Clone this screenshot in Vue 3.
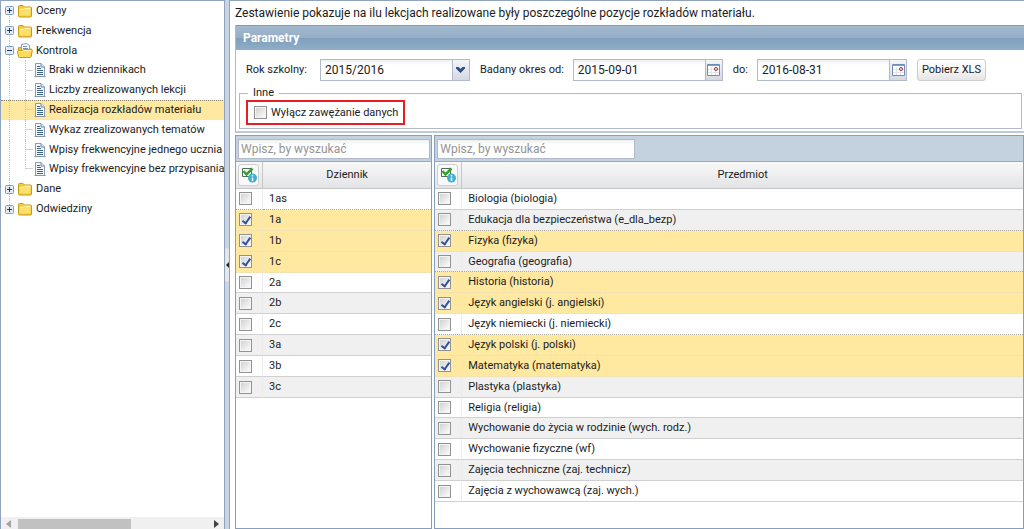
<script setup>
import { ref } from 'vue'

const tree = [
  { label: 'Oceny', kind: 'folder' },
  { label: 'Frekwencja', kind: 'folder' },
  { label: 'Kontrola', kind: 'open' },
  { label: 'Braki w dziennikach', kind: 'leaf' },
  { label: 'Liczby zrealizowanych lekcji', kind: 'leaf' },
  { label: 'Realizacja rozkładów materiału', kind: 'leaf', selected: true },
  { label: 'Wykaz zrealizowanych tematów', kind: 'leaf' },
  { label: 'Wpisy frekwencyjne jednego ucznia', kind: 'leaf' },
  { label: 'Wpisy frekwencyjne bez przypisania', kind: 'leaf', last: true },
  { label: 'Dane', kind: 'folder' },
  { label: 'Odwiedziny', kind: 'folder' },
]

const toRows = (names, checked) => names.map(name => ({ name, checked: checked.includes(name) }))

const grids = ref([
  {
    id: 'dziennik',
    title: 'Dziennik',
    rows: toRows(['1as', '1a', '1b', '1c', '2a', '2b', '2c', '3a', '3b', '3c'], ['1a', '1b', '1c']),
  },
  {
    id: 'przedmiot',
    title: 'Przedmiot',
    rows: toRows(
      [
        'Biologia (biologia)',
        'Edukacja dla bezpieczeństwa (e_dla_bezp)',
        'Fizyka (fizyka)',
        'Geografia (geografia)',
        'Historia (historia)',
        'Język angielski (j. angielski)',
        'Język niemiecki (j. niemiecki)',
        'Język polski (j. polski)',
        'Matematyka (matematyka)',
        'Plastyka (plastyka)',
        'Religia (religia)',
        'Wychowanie do życia w rodzinie (wych. rodz.)',
        'Wychowanie fizyczne (wf)',
        'Zajęcia techniczne (zaj. technicz)',
        'Zajęcia z wychowawcą (zaj. wych.)',
      ],
      [
        'Fizyka (fizyka)',
        'Historia (historia)',
        'Język angielski (j. angielski)',
        'Język polski (j. polski)',
        'Matematyka (matematyka)',
      ]
    ),
  },
])

const year = ref('2015/2016')
const dateFrom = ref('2015-09-01')
const dateTo = ref('2016-08-31')
</script>

<template>
  <div class="app">
    <nav class="sidebar">
      <ul class="tree">
        <li v-for="n in tree" :key="n.label" class="node" :class="[n.kind, { selected: n.selected, last: n.last }]">
          <button v-if="n.kind !== 'leaf'" type="button" class="expander" :aria-label="n.label">
            <svg width="9" height="9" viewBox="0 0 9 9">
              <rect x=".5" y=".5" width="8" height="8" rx="1" fill="#e4ebf5" stroke="#7e9cc4" />
              <path :d="n.kind === 'open' ? 'M2 4.5h5' : 'M2 4.5h5M4.5 2v5'" stroke="#223c66" />
            </svg>
          </button>
          <a href="#" class="link">
            <svg v-if="n.kind === 'folder'" class="icon" width="16" height="16" viewBox="0 0 16 16">
              <path d="M1.500 12.500v-9q0-1 1-1H6l1.500 1.500h6q1 0 1 1v8q0 1-1 1h-11q-1 0-1-1z" fill="#f2cb3c" stroke="#c99a14" />
              <path d="M2.500 12.500v-6q0-1 1-1h3l1-1h6v8z" fill="#fbe06c" />
              <path d="M3 7.500q0-1 1-1h3l1-1h5.500" fill="none" stroke="#fff2ac" />
            </svg>
            <svg v-else-if="n.kind === 'open'" class="icon" width="16" height="16" viewBox="0 0 16 16">
              <path d="M1.500 13V4.500h3L6 6h8.500v7z" fill="#efc636" stroke="#c99a14" />
              <path d="M4.500 1.500l5-1 3 2v6h-8z" fill="#f7fafd" stroke="#8c9fb8" />
              <path d="M6 3.500h4M6 5.500h5" stroke="#7d95b5" />
              <path d="M.5 8.500q0-1 1-1h4l1-1h8q1 0 .8 1l-1.300 6q-.2 1-1.200 1H2.500q-1 0-1.100-1z" fill="#fadb5c" stroke="#c99a14" />
              <path d="M2 8.500h4l1-1h7" fill="none" stroke="#fff2ac" />
            </svg>
            <svg v-else class="icon" width="12" height="14" viewBox="0 0 12 14">
              <path d="M1.500 13.500V.5H7l3.500 3.500v9.500z" fill="#f4f8fc" stroke="#8a9bb0" />
              <path d="M.5 13.500h11" stroke="#8695a8" />
              <path d="M7 .5V4h3.500" fill="#dbe6f2" stroke="#6f88a8" />
              <path d="M3 3.500h3M3 5.500h4M3 7.500h6M3 9.500h6M3 11.500h6" stroke="#40618e" />
            </svg>
            <span>{{ n.label }}</span>
          </a>
        </li>
      </ul>
      <div class="scrollbar">
        <svg width="5" height="8" viewBox="0 0 5 8"><path d="M5 0v8L0 4z" fill="#a3a3a3" /></svg>
        <div class="track"><div class="thumb"></div></div>
        <svg width="5" height="8" viewBox="0 0 5 8"><path d="M0 0v8l5-4z" fill="#404040" /></svg>
      </div>
    </nav>

    <div class="splitter">
      <button type="button" class="collapse" aria-label="Zwiń">
        <svg width="3" height="6" viewBox="0 0 3 6"><path d="M3 0v6L0 3z" fill="#222" /></svg>
      </button>
    </div>

    <main class="main">
      <p class="intro">Zestawienie pokazuje na ilu lekcjach realizowane były poszczególne pozycje rozkładów materiału.</p>

      <section class="params">
        <h2 class="params-title">Parametry</h2>
        <form class="fields" @submit.prevent>
          <label for="year">Rok szkolny:</label>
          <div class="combo">
            <select id="year" v-model="year">
              <option>2015/2016</option>
            </select>
            <span class="trigger arrow">
              <svg width="9" height="6" viewBox="0 0 9 6"><path d="M0 0h2.500l2 2 2-2H9v1.500L4.500 6 0 1.500z" fill="#2f4a86" /></svg>
            </span>
          </div>
          <label for="from">Badany okres od:</label>
          <div class="combo">
            <input id="from" v-model="dateFrom" type="text" />
            <button type="button" class="trigger" aria-label="Kalendarz">
              <svg width="13" height="12" viewBox="0 0 13 12">
                <path d="M.5.5h12v11H.5z" fill="#fff" stroke="#6d8cbd" />
                <path d="M1 1.500h11" stroke="#7f9ccb" />
                <path d="M4.500 3v8M8.500 3v8M1 5.500h11M1 8.500h11" stroke="#dfe5ef" />
                <circle cx="9" cy="5" r="1.500" fill="#fff" stroke="#a02030" />
              </svg>
            </button>
          </div>
          <label for="to">do:</label>
          <div class="combo">
            <input id="to" v-model="dateTo" type="text" />
            <button type="button" class="trigger" aria-label="Kalendarz">
              <svg width="13" height="12" viewBox="0 0 13 12">
                <path d="M.5.5h12v11H.5z" fill="#fff" stroke="#6d8cbd" />
                <path d="M1 1.500h11" stroke="#7f9ccb" />
                <path d="M4.500 3v8M8.500 3v8M1 5.500h11M1 8.500h11" stroke="#dfe5ef" />
                <circle cx="9" cy="5" r="1.500" fill="#fff" stroke="#a02030" />
              </svg>
            </button>
          </div>
          <button type="button" class="export">Pobierz XLS</button>
        </form>
        <fieldset class="other">
          <legend>Inne</legend>
          <label class="narrow"><input type="checkbox" class="check" />Wyłącz zawężanie danych</label>
        </fieldset>
      </section>

      <div class="grids">
        <section v-for="g in grids" :key="g.id" class="grid" :class="g.id">
          <div class="toolbar">
            <input type="text" class="search" placeholder="Wpisz, by wyszukać" :aria-label="g.title" />
          </div>
          <table>
            <thead>
              <tr>
                <th class="tick">
                  <button type="button" class="all" aria-label="Zaznacz">
                    <svg width="16" height="16" viewBox="0 0 16 16">
                      <path d="M1.500 1.500h9v8h-9z" fill="#fff" stroke="#4f6f55" />
                      <path d="M2.500 4L5.500 7.500 11.500 1.500" fill="none" stroke="#35a02c" stroke-width="2.500" />
                      <circle cx="11.500" cy="11" r="4.500" fill="#42afd0" />
                      <path d="M11.500 8v1.500M11.500 10.500v3.500" stroke="#e9faff" stroke-width="1.500" />
                    </svg>
                  </button>
                </th>
                <th>{{ g.title }}</th>
              </tr>
            </thead>
            <tbody>
              <tr v-for="(r, i) in g.rows" :key="r.name" :class="{ on: r.checked, first: r.checked && !(i && g.rows[i - 1].checked) }">
                <td class="tick"><input :id="g.id + i" v-model="r.checked" type="checkbox" class="check" /></td>
                <td><label :for="g.id + i">{{ r.name }}</label></td>
              </tr>
            </tbody>
          </table>
        </section>
      </div>
    </main>
  </div>
</template>

<style scoped>
.app {
  display: grid;
  grid-template-columns: 225px 4px minmax(0, 1fr);
  height: 100vh;
  color: #1c1c1c;
  font: 11px/14px Roboto, "Open Sans", sans-serif;
}
* { box-sizing: border-box; }
button, input, select { font: inherit; color: inherit; margin: 0; }
button { padding: 0; cursor: pointer; }
svg { display: block; flex: none; }

.sidebar {
  display: flex;
  flex-direction: column;
  min-width: 0;
  overflow: hidden;
  border: 1px solid #90a5bd;
  border-bottom: 0;
  background: #fff;
}
.tree {
  flex: none;
  display: grid;
  grid-auto-rows: 1fr;
  height: 218px;
  margin: 0;
  padding: 0;
  list-style: none;
}
.node {
  position: relative;
  display: flex;
  align-items: center;
  padding-left: 4px;
  white-space: nowrap;
}
.node::before {
  content: "";
  position: absolute;
  left: 8px;
  top: 0;
  bottom: 0;
  border-left: 1px dotted #c3c3c3;
}
.node:first-child::before { top: 10px; }
.node:last-child::before { bottom: 10px; }
.leaf { padding-left: 33px; }
.leaf::after {
  content: "";
  position: absolute;
  left: 24px;
  top: 0;
  bottom: 0;
  width: 7px;
  border-left: 1px dotted #c3c3c3;
  background: linear-gradient(#d3d3d3, #d3d3d3) 0 50% / 7px 1px no-repeat;
}
.leaf.last::after { bottom: 10px; background-position: 0 100%; }
.node.selected { background: #ffe89f; }
.node.selected .link::before {
  content: "";
  position: absolute;
  left: 0;
  right: 0;
  top: 0;
  border-top: 1px dotted #8a8468;
}
.expander {
  position: relative;
  border: 0;
  background: none;
  margin-right: 3px;
}
.link {
  display: flex;
  align-items: center;
  gap: 3px;
  color: inherit;
  text-decoration: none;
}
.scrollbar {
  display: flex;
  align-items: center;
  gap: 7px;
  height: 12px;
  margin-top: auto;
  padding: 2px 5px 0;
  background: #f0f0f0;
}
.track { flex: 1; height: 10px; }
.thumb { width: 60%; height: 100%; background: #c1c1c1; }

.splitter {
  display: flex;
  align-items: center;
  background: #c9d5e3;
}
.collapse {
  display: grid;
  place-items: center;
  width: 4px;
  height: 34px;
  border: 0;
  border-radius: 2px;
  background: #e6e6e6;
}

.main {
  display: flex;
  flex-direction: column;
  min-width: 0;
  padding-left: 5px;
  border-left: 1px solid #90a5bd;
  border-top: 1px solid #90a5bd;
}
.intro {
  margin: 0;
  padding: 5px 0 4px;
  font-size: 12px;
  line-height: 15px;
  white-space: nowrap;
  overflow: hidden;
}

.params { border-left: 1px solid #a9bccf; border-bottom: 2px solid #b9cad8; }
.params-title {
  margin: 0;
  padding-left: 7px;
  height: 25px;
  border-top: 1px solid #7c9bb8;
  background: linear-gradient(#a2b9ce, #95afc8 48%, #7f9fbe 50%, #8fadc6);
  color: #fff;
  font-size: 12px;
  line-height: 24px;
}
.fields {
  display: flex;
  align-items: center;
  padding: 9px 10px 5px;
  white-space: nowrap;
}
.fields label { margin-right: 13px; }
.fields label[for="from"], .fields label[for="to"] { margin-right: 9px; }
.combo {
  position: relative;
  display: flex;
  width: 150px;
  height: 22px;
  margin-right: 10px;
  border: 1px solid #b1bacb;
  background: linear-gradient(#eeefef, #fff 5px);
  font-size: 12px;
}
.combo input, .combo select {
  flex: 1;
  min-width: 0;
  padding: 0 4px;
  border: 0;
  outline: 0;
  background: none;
  appearance: none;
}
.trigger {
  display: grid;
  place-items: center;
  width: 17px;
  border: 0;
  border-left: 1px solid #b1bacb;
  background: linear-gradient(#f4f5f7, #d4d9e1);
}
.arrow {
  position: absolute;
  right: 0;
  top: 0;
  bottom: 0;
  pointer-events: none;
}
.export {
  width: 69px;
  height: 22px;
  border: 1px solid #cdcdcd;
  border-radius: 3px;
  background: linear-gradient(#fff, #f6f6f6 50%, #e5e5e5);
}
.other {
  min-width: 0;
  margin: 0 2px 2px 3px;
  padding: 0 6px 3px;
  border: 1px solid #b2bac9;
}
.other legend { margin-left: 2px; padding: 0 5px; line-height: 14px; }
.narrow {
  display: inline-flex;
  align-items: center;
  gap: 4px;
  height: 25px;
  padding: 0 5px 0 6px;
  border: 2px solid #e81c24;
  vertical-align: top;
}
.check {
  appearance: none;
  position: relative;
  display: block;
  width: 13px;
  height: 13px;
  border: 1px solid #929292;
  background: linear-gradient(135deg, #d3d3d3, #fafafa) content-box, #f4f4f4;
  padding: 1px;
}
.check:checked::after {
  content: "";
  position: absolute;
  left: 4px;
  top: 1px;
  width: 3px;
  height: 7px;
  border: solid #31529b;
  border-width: 0 2px 2px 0;
  transform: rotate(35deg);
}

.grids {
  flex: 1;
  display: flex;
  gap: 2px;
  min-height: 0;
  margin-top: 2px;
}
.grid {
  display: flex;
  flex-direction: column;
  border: 1px solid #86a0bb;
  background: #fff;
}
.dziennik { flex: 0 0 25%; }
.przedmiot { flex: 1; min-width: 0; }
.toolbar {
  flex: none;
  padding: 3px 1px 2px 2px;
  border-bottom: 1px solid #96acc1;
  background: #c4d2e0;
}
.search {
  display: block;
  width: 100%;
  max-width: 198px;
  height: 20px;
  padding: 0 2px;
  border: 1px solid #b1bacb;
  background: linear-gradient(#eeefef, #fff 5px);
  font-size: 12px;
}
.search::placeholder { color: #949494; opacity: 1; }
table { width: 100%; border-collapse: separate; border-spacing: 0; table-layout: fixed; }
.dziennik table { height: 236px; }
.przedmiot table { height: 340px; }
thead tr { height: 27px; }
th {
  height: 27px;
  padding: 0;
  border-bottom: 1px solid #c6c6c6;
  background: linear-gradient(#f8f8f8, #e3e4e6);
  font-weight: 400;
}
th.tick { width: 27px; border-right: 1px solid #c6c6c6; }
.all {
  display: grid;
  place-items: center;
  width: 21px;
  height: 22px;
  margin-left: 2px;
  border: 1px solid #cfcfcf;
  border-radius: 3px;
  background: #f9f9f9;
}
td { padding: 0 6px; border-bottom: 1px solid #d0d0d0; white-space: nowrap; overflow: hidden; }
td.tick { padding: 0 3px; border-right: 1px solid #ececec; }
tbody tr:nth-child(even) td { background: #f0f0f0; }
tbody tr.on td { background: #ffe89f; border-bottom-color: #f3e3b4; }
tbody tr.on td.tick { border-right-color: #f5e6b8; }
tbody tr:has(+ tr.first) td { border-bottom: 1px dotted #aaa79a; }
</style>
